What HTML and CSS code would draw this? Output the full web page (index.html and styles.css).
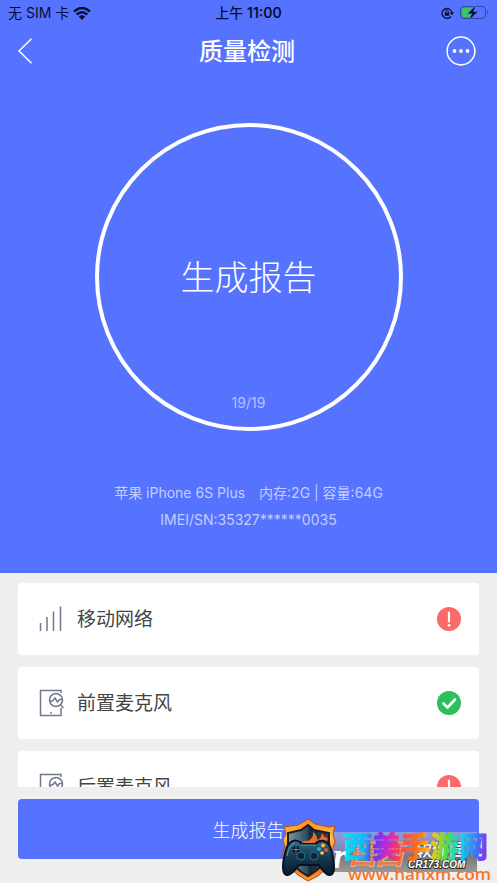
FILE: index.html
```html
<!DOCTYPE html>
<html lang="zh-CN">
<head>
<meta charset="utf-8">
<meta name="viewport" content="width=device-width, initial-scale=1">
<title>质量检测</title>
<link rel="stylesheet" href="styles.css">
</head>
<body>
<svg class="defs" aria-hidden="true">
  <defs>
    <symbol id="icon-device" viewBox="0 0 26 28">
      <path d="M22 19V26.500H1.500V1.500H22V4" fill="none" stroke="#71778c" stroke-width="1.500"/>
      <circle cx="17" cy="11" r="6.500" fill="#fff" stroke="#71778c" stroke-width="1.500"/>
      <path d="M10.500 12h3l2.500-3 2.500 4 2-2.500h3M21.500 16l3 3" fill="none" stroke="#71778c" stroke-width="1.500"/>
      <circle cx="12" cy="24" r="0.900" fill="#71778c"/>
    </symbol>
    <symbol id="icon-alert" viewBox="0 0 24 24">
      <circle cx="12" cy="12" r="12" fill="#fb6a6a"/>
      <path d="M12 5.500v9" stroke="#fff" stroke-width="2.200" stroke-linecap="round"/>
      <circle cx="12" cy="18.300" r="1.400" fill="#fff"/>
    </symbol>
  </defs>
</svg>
<div class="screen">
  <section class="hero">
    <div class="status">
      <div class="status-left">
        <span>无 SIM 卡</span>
        <svg class="wifi" width="18" height="13" viewBox="0 0 18 13" aria-hidden="true">
          <path d="M1 4.600Q9-2.600 17 4.600M3.700 7.500q5.300-4.600 10.600 0" fill="none" stroke="#071033" stroke-width="2.400"/>
          <path d="M5.800 9.600q3.200-2.600 6.400 0L9 12.900z" fill="#071033"/>
        </svg>
      </div>
      <span class="clock">上午 <b>11:00</b></span>
      <div class="status-right">
        <svg width="13" height="12" viewBox="0 0 13 12" aria-hidden="true">
          <path d="M10 9.500A5 5 0 1 1 11 5.500" fill="none" stroke="#071033" stroke-width="1.300"/>
          <path d="M8.800 5.200h4.200l-2.100 3z" fill="#071033"/>
          <path d="M3.800 5.500h4.400v3.300H3.800z" fill="#071033"/>
          <path d="M4.700 5.500V4.300a1.300 1.300 0 0 1 2.600 0v1.200" fill="none" stroke="#071033"/>
        </svg>
        <svg width="29" height="14" viewBox="0 0 29 14" aria-hidden="true">
          <rect x="0.500" y="0.500" width="25" height="12" rx="3.500" fill="none" stroke="#3448a0"/>
          <path d="M4 2h8v9H4a2 2 0 0 1-2-2V4a2 2 0 0 1 2-2z" fill="#35ca5b"/>
          <path d="M27 4.500q2 2 0 4z" fill="#3448a0"/>
          <path d="M15.500 0 8 7.500h4.200L9.500 13.500 17.500 5.700h-4.300z" fill="#071033" stroke="#5874ff" stroke-width="1.400" paint-order="stroke"/>
        </svg>
      </div>
    </div>
    <header class="nav">
      <button class="nav-button" type="button" aria-label="返回">
        <svg width="14" height="26" viewBox="0 0 14 26" aria-hidden="true"><path d="M13.500 0.700 1 13l12.500 12.300" fill="none" stroke="#fff" stroke-width="1.500"/></svg>
      </button>
      <h1>质量检测</h1>
      <button class="nav-button nav-more" type="button" aria-label="更多">
        <svg width="30" height="30" viewBox="0 0 30 30" aria-hidden="true">
          <circle cx="15" cy="15" r="13.900" fill="none" stroke="#fff" stroke-width="1.500"/>
          <g fill="#fff"><circle cx="8.500" cy="15" r="1.900"/><circle cx="15" cy="15" r="1.900"/><circle cx="21.500" cy="15" r="1.900"/></g>
        </svg>
      </button>
    </header>
    <button class="dial" type="button">
      <span class="dial-title">生成报告</span>
      <span class="dial-count">19/19</span>
    </button>
    <div class="device">
      <p><span>苹果 iPhone 6S Plus</span><span>内存:2G | 容量:64G</span></p>
      <p>IMEI/SN:35327******0035</p>
    </div>
  </section>
  <main class="results">
    <ul>
      <li>
        <svg class="kind" viewBox="0 0 26 28" aria-hidden="true"><path d="M1.500 18v8M8 12v14M14.500 6.500V26M21.500 1.500V26" stroke="#71778c" stroke-width="1.500"/></svg>
        <span class="name">移动网络</span>
        <svg class="state" role="img" aria-label="异常"><use href="#icon-alert"/></svg>
      </li>
      <li>
        <svg class="kind" aria-hidden="true"><use href="#icon-device"/></svg>
        <span class="name">前置麦克风</span>
        <svg class="state" viewBox="0 0 24 24" role="img" aria-label="正常"><circle cx="12" cy="12" r="12" fill="#2cbf5c"/><path d="m6.500 12.500 4 4 7.500-8" fill="none" stroke="#fff" stroke-width="2.600" stroke-linecap="round" stroke-linejoin="round"/></svg>
      </li>
      <li>
        <svg class="kind" aria-hidden="true"><use href="#icon-device"/></svg>
        <span class="name">后置麦克风</span>
        <svg class="state" role="img" aria-label="异常"><use href="#icon-alert"/></svg>
      </li>
    </ul>
  </main>
  <footer class="actions">
    <button class="submit" type="button">生成报告</button>
  </footer>
  <svg class="watermark" width="220" height="65" viewBox="0 0 220 65" aria-hidden="true">
    <defs>
      <linearGradient id="fire" x2="0" y2="1"><stop stop-color="#ff8b20"/><stop offset=".3" stop-color="#ffc04a"/><stop offset=".7" stop-color="#f05a20"/><stop offset="1" stop-color="#ff9d2b"/></linearGradient>
      <linearGradient id="steel" x2="1"><stop stop-color="#7f97a6"/><stop offset=".48" stop-color="#29495b"/><stop offset=".52" stop-color="#162a39"/><stop offset="1" stop-color="#31434c"/></linearGradient>
      <linearGradient id="pad" x2="0" y2="1"><stop stop-color="#30718f"/><stop offset=".4" stop-color="#174159"/><stop offset="1" stop-color="#07182b"/></linearGradient>
      <linearGradient id="band" x2="0" y2="1"><stop stop-color="#8f9adc"/><stop offset=".45" stop-color="#8288b4"/><stop offset=".6" stop-color="#777"/><stop offset="1" stop-color="#999"/></linearGradient>
      <linearGradient id="rainbow" gradientUnits="userSpaceOnUse" x1="66" x2="212" y1="0" y2="20"><stop stop-color="#00f0e8"/><stop offset=".17" stop-color="#12b4ff"/><stop offset=".23" stop-color="#5a3cf5"/><stop offset=".32" stop-color="#c428d0"/><stop offset=".41" stop-color="#ff4050"/><stop offset=".53" stop-color="#ff7417"/><stop offset=".62" stop-color="#ffc31a"/><stop offset=".72" stop-color="#52dd48"/><stop offset=".82" stop-color="#15d0ed"/><stop offset=".92" stop-color="#3677ff"/><stop offset="1" stop-color="#9626ed"/></linearGradient>
    </defs>
    <path d="M52 14H200V54H52z" fill="url(#band)"/>
    <text class="mark-r" x="56" y="50">r</text>
    <text class="mark-base" x="72" y="46">西西</text>
    <text class="mark-park" x="138" y="38">软件园</text>
    <text class="mark-site" x="131" y="50">CR173.COM</text>
    <g transform="translate(3)">
      <path d="M28 1 35 6 49 9 55 8 53 16 55 24 51 35 53 42 47 50 38 58 28 63 18 57 8 48 2 37 5 29 3 22 6 16 4 9 18 7z" fill="url(#fire)" stroke="#b2501c"/>
      <path d="M28 7 34 12 49 15V32Q47 48 28 58 9 48 8 31V15L21 12z" fill="url(#steel)" stroke="#291817" stroke-width="2"/>
      <path d="M20 28Q22 22 28 23 34 20 33 14q6 5 3 10 5-3 6-9 2 5 6 5-3 5-2 10 3-1 5-5 1 8-4 14L18 35z" fill="#f46b20"/>
      <path d="M30 29q7-3 8-9 1 6-2 9 7-1 9-6 1 6-3 10z" fill="#ffc34b"/>
      <path d="M11 24q4-3 9 0l2 2h13q5-5 11-2 5 3 7 16 3 16-3 17-4 1-11-10H19Q11 58 7 57 1 56 4 40 6 27 11 24z" fill="url(#pad)" stroke="#071325" stroke-width="2"/>
      <path d="M7 38q2-12 8-13M21 27h15" fill="none" stroke="#4aa1bc"/>
      <path d="M16 28v7M12.500 31.500h7" stroke="#06101d" stroke-width="4"/>
      <path d="M16 28v7M12.500 31.500h7" stroke="#668a99"/>
      <g fill="#0b2539" stroke="#327087"><circle cx="21" cy="38" r="4"/><circle cx="34" cy="38" r="4"/></g>
      <circle cx="39" cy="31" r="2" fill="#2fa6e5"/><circle cx="43" cy="27.500" r="2" fill="#ffb932"/><circle cx="46" cy="32" r="2" fill="#ef4c36"/><circle cx="42" cy="35" r="1.800" fill="#ffd33b"/>
    </g>
    <text class="mark-name" x="66" y="40" fill="url(#rainbow)" stroke="url(#rainbow)">西美手游网</text>
    <text class="mark-url" x="71" y="62">www.hanxm.com</text>
  </svg>
</div>
</body>
</html>
```
FILE: styles.css
```css
* { box-sizing: border-box; }

body {
  margin: 0;
  background: #efefef;
  color: #444;
  font-family: Inter, "Noto Sans CJK SC", sans-serif;
}

h1, p, ul { margin: 0; padding: 0; }

button {
  border: 0;
  padding: 0;
  background: none;
  color: inherit;
  font-family: inherit;
}

svg { display: block; flex: none; }

.defs { position: absolute; width: 0; height: 0; }

.screen {
  position: relative;
  display: flex;
  flex-direction: column;
  height: 100vh;
  overflow: hidden;
}

.hero {
  display: flex;
  flex: none;
  flex-direction: column;
  align-items: center;
  padding-bottom: 40px;
  background: #5673ff;
  color: #fff;
}

.status {
  display: grid;
  grid-template-columns: 1fr auto 1fr;
  align-items: center;
  width: 100%;
  height: 26px;
  padding: 0 8px;
  color: #071033;
  font-size: 14px;
  line-height: 20px;
}

.status-left, .status-right {
  display: flex;
  align-items: center;
  gap: 4px;
}

.status-right { justify-content: flex-end; gap: 6px; }
.clock { font-weight: 500; }
.clock b { font-weight: 600; }

.nav {
  display: grid;
  grid-template-columns: 1fr auto 1fr;
  align-items: center;
  width: 100%;
  height: 50px;
  padding: 0 21px 0 18px;
}

.nav h1 {
  padding-top: 2px;
  font-size: 24px;
  font-weight: 500;
  line-height: 36px;
}

.nav-button { justify-self: start; }
.nav-more { justify-self: end; }

.dial {
  display: grid;
  grid-template-rows: 1fr 48px 1fr;
  justify-items: center;
  width: 308px;
  height: 308px;
  margin-top: 47px;
  border: 4px solid #fff;
  border-radius: 50%;
}

.dial-title {
  grid-row: 2;
  font-size: 34px;
  font-weight: 300;
  line-height: 50px;
}

.dial-count {
  grid-row: 3;
  align-self: end;
  padding-bottom: 14px;
  color: #b5c2ff;
  font-size: 14px;
  line-height: 20px;
}

.device {
  margin-top: 48px;
  color: #c3ceff;
  font-size: 14px;
  line-height: 27px;
  text-align: center;
}

.device p:first-child {
  display: flex;
  justify-content: center;
  gap: 14px;
}

.results {
  flex: 1;
  min-height: 0;
  overflow: hidden;
  padding: 10px 18px 0;
}

.results ul {
  display: grid;
  gap: 12px;
  list-style: none;
}

.results li {
  display: flex;
  align-items: center;
  height: 72px;
  padding: 0 18px 0 21px;
  border-radius: 4px;
  background: #fff;
}

.kind { width: 26px; height: 28px; }
.state { width: 24px; height: 24px; }

.name {
  flex: 1;
  padding: 2px 0 0 12px;
  font-size: 19px;
  line-height: 28px;
}

.actions {
  flex: none;
  padding: 12px 18px 24px;
}

.submit {
  display: block;
  width: 100%;
  height: 60px;
  border-radius: 4px;
  background: #5673ff;
  color: #fff;
  font-size: 18px;
  font-weight: 300;
}

.watermark {
  position: absolute;
  right: 0;
  bottom: 0;
}

.mark-r {
  fill: #fff;
  font: italic bold 36px "Liberation Serif", serif;
}

.mark-base {
  fill: #e97842;
  stroke: #f8d8c8;
  stroke-width: 1px;
  paint-order: stroke;
  font: italic bold 27px "Noto Sans CJK SC", sans-serif;
}

.mark-park {
  fill: #eee;
  stroke: #444;
  stroke-width: 1px;
  paint-order: stroke;
  font: bold 17px "Noto Sans CJK SC", sans-serif;
}

.mark-site {
  fill: #fff;
  stroke: #333;
  stroke-width: 2px;
  paint-order: stroke;
  font: italic bold 10px "Liberation Sans", sans-serif;
}

.mark-name {
  stroke-width: 1px;
  font: bold 29px "Noto Sans CJK SC", sans-serif;
}

.mark-url {
  fill: #f5762c;
  font: 600 17px "Open Sans", sans-serif;
}
```
